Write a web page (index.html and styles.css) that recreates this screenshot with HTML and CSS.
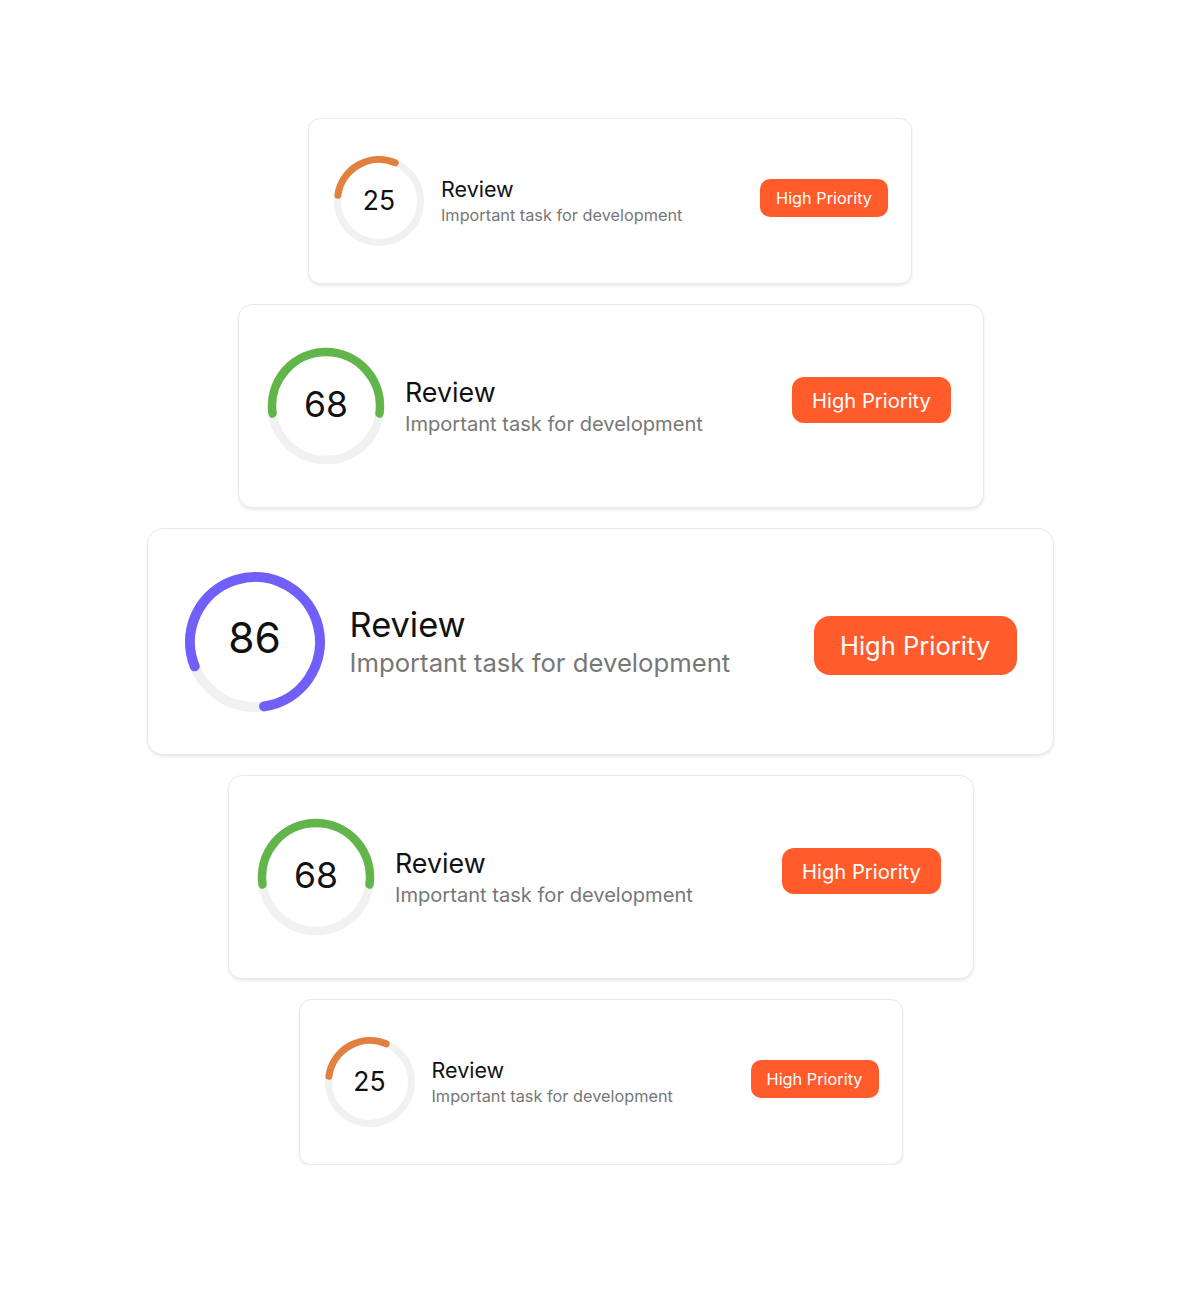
FILE: index.html
```html
<!DOCTYPE html>
<html lang="en">
<head>
<meta charset="utf-8">
<title>Tasks</title>
<link rel="stylesheet" href="styles.css">
</head>
<body>
<main class="stack">
  <article class="task task--sm task--shift-a">
    <div class="gauge">
      <svg viewBox="0 0 90 90" class="gauge-ring">
        <circle cx="45" cy="45" r="41.5" class="track" stroke-width="7"/>
        <path d="M3.90 39.22 A41.5 41.5 0 0 1 61.21 6.80" class="arc arc--orange" stroke-width="7"/>
      </svg>
      <span class="gauge-value">25</span>
    </div>
    <div class="task-text">
      <h3 class="task-title">Review</h3>
      <p class="task-desc">Important task for development</p>
    </div>
    <span class="badge">High Priority</span>
  </article>

  <article class="task task--md task--shift-b">
    <div class="gauge">
      <svg viewBox="0 0 118 118" class="gauge-ring">
        <circle cx="59" cy="59" r="54" class="track" stroke-width="8.5"/>
        <path d="M5.52 66.52 A54 54 0 1 1 112.48 66.52" class="arc arc--green" stroke-width="8.5"/>
      </svg>
      <span class="gauge-value">68</span>
    </div>
    <div class="task-text">
      <h3 class="task-title">Review</h3>
      <p class="task-desc">Important task for development</p>
    </div>
    <span class="badge">High Priority</span>
  </article>

  <article class="task task--lg">
    <div class="gauge">
      <svg viewBox="0 0 142 142" class="gauge-ring">
        <circle cx="71" cy="71" r="65" class="track" stroke-width="10"/>
        <path d="M10.73 95.35 A65 65 0 1 1 80.05 135.37" class="arc arc--purple" stroke-width="10"/>
      </svg>
      <span class="gauge-value">86</span>
    </div>
    <div class="task-text">
      <h3 class="task-title">Review</h3>
      <p class="task-desc">Important task for development</p>
    </div>
    <span class="badge">High Priority</span>
  </article>

  <article class="task task--md task--shift-c">
    <div class="gauge">
      <svg viewBox="0 0 118 118" class="gauge-ring">
        <circle cx="59" cy="59" r="54" class="track" stroke-width="8.5"/>
        <path d="M5.52 66.52 A54 54 0 1 1 112.48 66.52" class="arc arc--green" stroke-width="8.5"/>
      </svg>
      <span class="gauge-value">68</span>
    </div>
    <div class="task-text">
      <h3 class="task-title">Review</h3>
      <p class="task-desc">Important task for development</p>
    </div>
    <span class="badge">High Priority</span>
  </article>

  <article class="task task--sm task--shift-d">
    <div class="gauge">
      <svg viewBox="0 0 90 90" class="gauge-ring">
        <circle cx="45" cy="45" r="41.5" class="track" stroke-width="7"/>
        <path d="M3.90 39.22 A41.5 41.5 0 0 1 61.21 6.80" class="arc arc--orange" stroke-width="7"/>
      </svg>
      <span class="gauge-value">25</span>
    </div>
    <div class="task-text">
      <h3 class="task-title">Review</h3>
      <p class="task-desc">Important task for development</p>
    </div>
    <span class="badge">High Priority</span>
  </article>
</main>
</body>
</html>
```

FILE: styles.css
```css
* { box-sizing: border-box; }

html, body {
  margin: 0;
  background: #ffffff;
}

body {
  font-family: Inter, "Liberation Sans", sans-serif;
  color: #111111;
}

.stack {
  display: flex;
  flex-direction: column;
  align-items: center;
  gap: 20px;
  padding-top: 118px;
}

/* card */
.task {
  display: flex;
  align-items: center;
  background: #ffffff;
  border: 1.5px solid #e9e9e9;
  box-shadow: 0 2px 3px rgba(0, 0, 0, 0.08);
}

.task-text {
  flex: 1;
  display: flex;
  flex-direction: column;
}

.task-title {
  margin: 0;
  font-weight: 400;
  color: #111111;
  line-height: 1.2;
}

.task-desc {
  margin: 0;
  color: #777777;
  font-weight: 400;
  line-height: 1.2;
}

.badge {
  display: flex;
  align-items: center;
  justify-content: center;
  background: #ff5b2b;
  color: #ffffff;
  white-space: nowrap;
}

/* circular gauge */
.gauge {
  position: relative;
  flex: none;
  display: flex;
  align-items: center;
  justify-content: center;
}

.gauge-ring {
  position: absolute;
  inset: 0;
  width: 100%;
  height: 100%;
}

.track {
  fill: none;
  stroke: #f1f1f1;
}

.arc {
  fill: none;
  stroke-linecap: round;
}

.arc--orange { stroke: #e2803f; }
.arc--green { stroke: #62b54a; }
.arc--purple { stroke: #705ffb; }

.gauge-value {
  position: relative;
  color: #111111;
}

/* small card */
.task--sm {
  width: 604px;
  height: 166px;
  padding: 0 23px 0 25px;
  border-radius: 12px;
}
.task--sm .gauge { width: 90px; height: 90px; margin-right: 17px; }
.task--sm .gauge-value { font-size: 26.5px; margin-bottom: 3px; }
.task--sm .task-title { font-size: 21.5px; }
.task--sm .task-desc { font-size: 16.3px; margin-top: 3px; }
.task--sm .badge {
  width: 128px;
  height: 38px;
  border-radius: 10px;
  font-size: 16.3px;
  margin-bottom: 6px;
}

/* medium card */
.task--md {
  width: 746px;
  height: 204px;
  padding: 0 32px 0 28px;
  border-radius: 14px;
}
.task--md .gauge { width: 118px; height: 118px; margin-right: 20px; }
.task--md .gauge-value { font-size: 35.5px; margin-bottom: 4px; }
.task--md .task-title { font-size: 26.8px; }
.task--md .task-desc { font-size: 20.1px; margin-top: 4px; }
.task--md .badge {
  width: 159px;
  height: 46px;
  border-radius: 12px;
  font-size: 20.2px;
  margin-bottom: 12px;
}

/* large card */
.task--lg {
  width: 907px;
  height: 227px;
  padding: 0 36px 0 36px;
  border-radius: 16px;
}
.task--lg .gauge { width: 142px; height: 142px; margin-right: 24px; }
.task--lg .gauge-value { font-size: 42.5px; margin-bottom: 8px; }
.task--lg .task-title { font-size: 34.4px; }
.task--lg .task-desc { font-size: 25.7px; margin-top: 3px; }
.task--lg .badge {
  width: 203px;
  height: 59px;
  border-radius: 16px;
  font-size: 25.5px;
  margin-top: 8px;
}

/* stagger of the stacked cards */
.task--shift-a { margin-left: 20px; }
.task--shift-b { margin-left: 22px; }
.task--shift-c { margin-left: 2px; }
.task--shift-d { margin-left: 1px; }
```
